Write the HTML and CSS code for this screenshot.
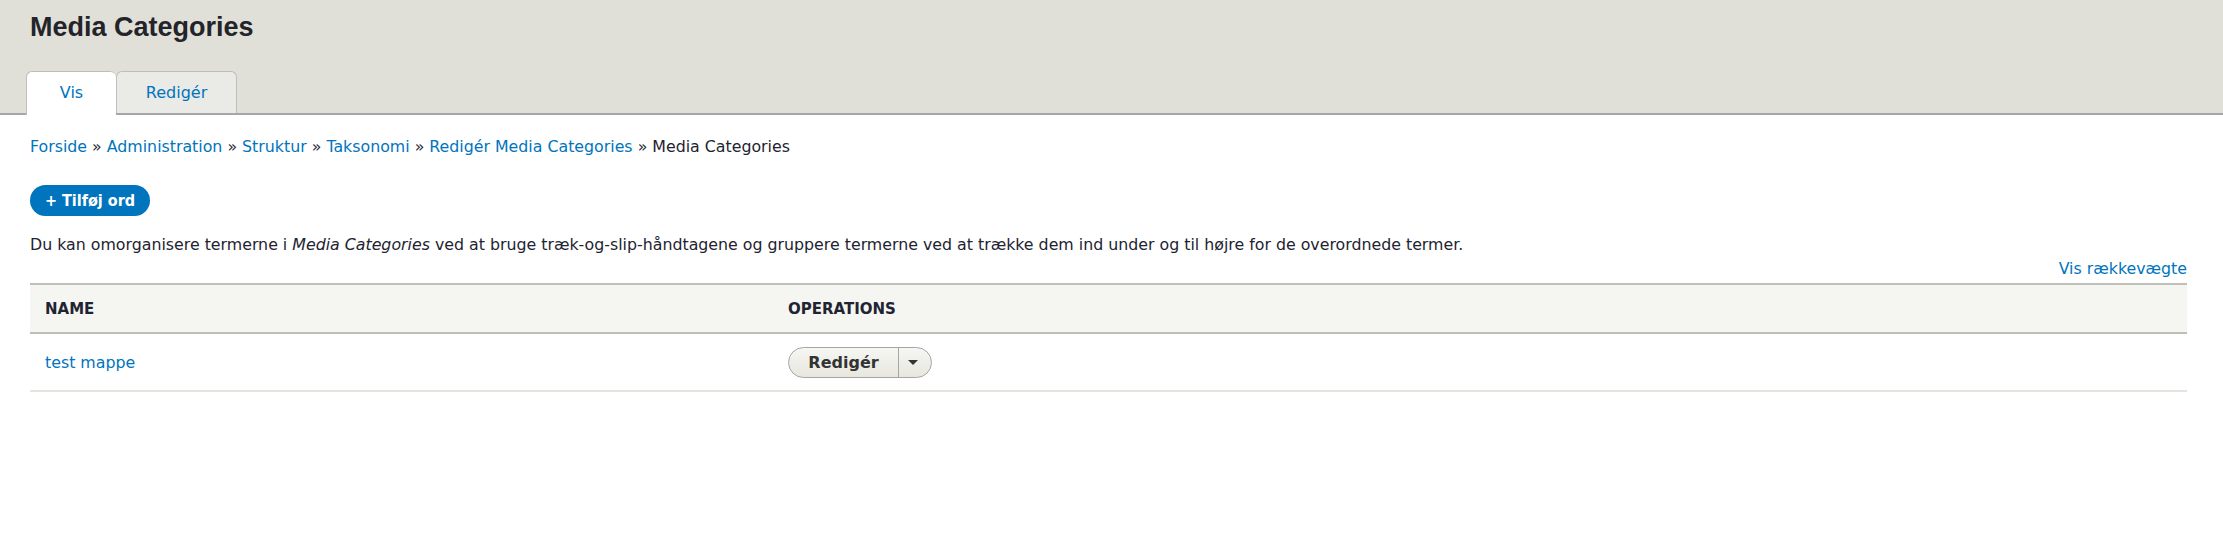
FILE: index.html
```html
<!DOCTYPE html>
<html lang="da">
<head>
  <meta charset="UTF-8">
  <title>Media Categories</title>
  <link rel="stylesheet" href="styles.css">
</head>
<body>
  <header class="page-head">
    <h1>Media Categories</h1>
    <nav class="tabs">
      <a class="tab active" href="#">Vis</a>
      <a class="tab" href="#">Redigér</a>
    </nav>
  </header>

  <main class="content">
    <div class="breadcrumb">
      <a href="#">Forside</a> » <a href="#">Administration</a> » <a href="#">Struktur</a> » <a href="#">Taksonomi</a> » <a href="#">Redigér Media Categories</a> » Media Categories
    </div>

    <a class="action-btn" href="#">+ Tilføj ord</a>

    <p class="help">Du kan omorganisere termerne i <em>Media Categories</em> ved at bruge træk-og-slip-håndtagene og gruppere termerne ved at trække dem ind under og til højre for de overordnede termer.</p>

    <div class="weight-toggle"><a href="#">Vis rækkevægte</a></div>

    <table class="terms">
      <thead>
        <tr>
          <th class="col-name">Name</th>
          <th>Operations</th>
        </tr>
      </thead>
      <tbody>
        <tr>
          <td class="col-name"><a href="#">test mappe</a></td>
          <td>
            <div class="dropbutton">
              <a class="drop-main" href="#">Redigér</a>
              <span class="drop-toggle"><span class="caret"></span></span>
            </div>
          </td>
        </tr>
      </tbody>
    </table>
  </main>
</body>
</html>
```

FILE: styles.css
```css
body {
  margin: 0;
  font-family: "DejaVu Sans", "Liberation Sans", sans-serif;
  color: #222330;
  background: #fff;
  font-size: 15.8px;
}
a {
  color: #0074bd;
  text-decoration: none;
}
.page-head {
  background: #e0e0d8;
  border-bottom: 2px solid #a6a6a6;
  padding: 9px 30px 0 26px;
}
.page-head h1 {
  margin: 0 0 0 4px;
  font-family: "Liberation Sans", Arial, sans-serif;
  font-size: 27px;
  font-weight: bold;
  line-height: 36px;
  color: #232429;
}
.tabs {
  display: flex;
  margin-top: 26px;
  margin-bottom: -2px;
}
.tab {
  display: block;
  height: 42px;
  line-height: 42px;
  box-sizing: border-box;
  text-align: center;
  font-size: 16px;
  background: #eaeae6;
  border: 1px solid #bfbfba;
  border-bottom: none;
  border-radius: 6px 6px 0 0;
  width: 121px;
}
.tab.active {
  background: #fff;
  width: 90px;
  height: 44px;
  border-right: none;
}
.content {
  padding: 0 36px 0 30px;
}
.breadcrumb {
  margin-top: 21px;
  line-height: 22px;
}
.action-btn {
  display: block;
  width: 120px;
  margin-top: 27px;
  height: 31px;
  line-height: 31px;
  background: #0074bd;
  color: #fff;
  font-family: "DejaVu Sans Condensed", "DejaVu Sans", sans-serif;
  font-weight: bold;
  font-size: 16px;
  white-space: nowrap;
  border-radius: 16px;
  text-align: center;
}
.help {
  margin: 18px 0 0;
  line-height: 22px;
}
.weight-toggle {
  text-align: right;
  line-height: 22px;
  margin-top: 2px;
}
.terms {
  width: 100%;
  border-collapse: collapse;
  margin-top: 3px;
}
.terms th {
  background: #f5f5f2;
  border-top: 2px solid #bfbfba;
  border-bottom: 2px solid #bfbfba;
  text-align: left;
  text-transform: uppercase;
  font-size: 15px;
  font-weight: 600;
  height: 47px;
  padding: 0 15px;
  color: #222330;
}
.terms td {
  border-bottom: 2px solid #e6e4df;
  height: 56px;
  padding: 0 15px;
}
.terms .col-name {
  width: 713px;
}
.dropbutton {
  display: inline-flex;
  height: 31px;
  border: 1px solid #a6a6a6;
  border-radius: 16px;
  background: linear-gradient(#f6f6f3, #e7e7df);
  box-sizing: border-box;
  vertical-align: middle;
}
.drop-main {
  width: 109px;
  line-height: 29px;
  text-align: center;
  color: #333;
  font-weight: bold;
  font-size: 16px;
  border-right: 1px solid #a6a6a6;
}
.drop-toggle {
  width: 32px;
  display: flex;
  align-items: center;
  justify-content: center;
}
.caret {
  width: 0;
  height: 0;
  border-left: 5px solid transparent;
  border-right: 5px solid transparent;
  border-top: 5px solid #333;
  margin-left: -4px;
}
```
